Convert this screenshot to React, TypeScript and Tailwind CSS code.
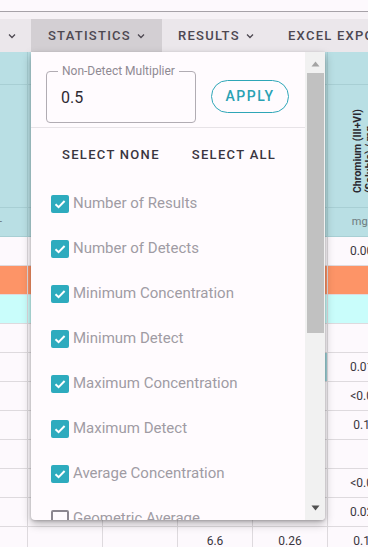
import React from "react";

const Chevron = () => (
  <svg width="10" height="10" viewBox="0 0 10 10" className="ml-[5px] shrink-0">
    <path d="M2 3.5 L5 6.5 L8 3.5" fill="none" stroke="currentColor" strokeWidth="1.3" />
  </svg>
);

const Check = () => (
  <span className="flex h-[18px] w-[18px] items-center justify-center rounded-[2px] bg-[#2eabbe]">
    <svg width="14" height="14" viewBox="0 0 14 14">
      <path d="M2.5 7.2 L5.6 10.2 L11.6 4" fill="none" stroke="white" strokeWidth="2" />
    </svg>
  </span>
);

const stats = [
  { label: "Number of Results", on: true },
  { label: "Number of Detects", on: true },
  { label: "Minimum Concentration", on: true },
  { label: "Minimum Detect", on: true },
  { label: "Maximum Concentration", on: true },
  { label: "Maximum Detect", on: true },
  { label: "Average Concentration", on: true },
  { label: "Geometric Average", on: false },
];

type RowProps = { bg: string; cells: string[]; mark?: boolean };

const DataRow = ({ bg, cells, mark }: RowProps) => (
  <div className={`grid h-[29px] grid-cols-[27px_75px_75px_75px_75px_75px] border-b border-[#dedade] ${bg}`}>
    {cells.map((c, i) => (
      <div
        key={i}
        className={`relative flex items-center justify-center text-[12px] text-[#3a363d] ${i > 0 ? "border-l border-[#dedade]" : ""}`}
      >
        {c}
        {mark && i === 4 && <span className="absolute right-0 top-0 h-full w-[2px] bg-[#9fd3da]" />}
      </div>
    ))}
  </div>
);

const rows: RowProps[] = [
  { bg: "bg-[#fdf9fd]", cells: ["", "", "", "", "", "0.005"] },
  { bg: "bg-[#fd9467]", cells: ["", "", "", "", "", ""] },
  { bg: "bg-[#c9fdfb]", cells: ["", "", "", "", "", ""] },
  { bg: "bg-[#fdf9fd]", cells: ["", "", "", "", "", ""] },
  { bg: "bg-[#fdf9fd]", cells: ["", "", "", "", "", "0.013"], mark: true },
  { bg: "bg-[#fdf9fd]", cells: ["", "", "", "", "", "<0.01"] },
  { bg: "bg-[#fdf9fd]", cells: ["", "", "", "", "", "0.12"] },
  { bg: "bg-[#fdf9fd]", cells: ["", "", "", "", "", ""] },
  { bg: "bg-[#fdf9fd]", cells: ["", "", "", "", "", "<0.01"] },
  { bg: "bg-[#fdf9fd]", cells: ["", "", "", "", "", "0.023"] },
  { bg: "bg-[#fdf9fd]", cells: ["", "", "", "6.6", "0.26", "0.14"] },
];

export default function App() {
  return (
    <div className="relative h-[547px] w-[368px] overflow-hidden bg-[#fdf9fd] font-['Roboto',sans-serif]">
      <div className="h-[11px] bg-[#fdf9fd]" />
      <div className="h-px bg-[#a6a2a8]" />
      <div className="h-[7px] bg-[#f6f2f6]" />

      {/* toolbar */}
      <div className="flex h-[33px] items-center overflow-hidden whitespace-nowrap bg-[#ebe7eb] text-[13px] font-medium tracking-[1.25px] text-[#4d4851]">
        <div className="flex h-full w-[31px] shrink-0 items-center pl-[2px]">
          <Chevron />
        </div>
        <div className="flex h-full w-[131px] shrink-0 items-center bg-[#d3cfd3] pl-[17px]">
          STATISTICS
          <Chevron />
        </div>
        <div className="flex h-full w-[110px] shrink-0 items-center pl-[16px]">
          RESULTS
          <Chevron />
        </div>
        <div className="flex h-full shrink-0 items-center pl-[16px]">EXCEL EXPORT</div>
      </div>

      {/* table */}
      <div className="w-[402px]">
        <div className="grid h-[33px] grid-cols-[27px_75px_75px_75px_75px_75px] border-b border-[#a8cfd4] bg-[#b9dfe4]">
          {[0, 1, 2, 3, 4, 5].map((i) => (
            <div key={i} className={i > 0 ? "border-l border-[#a8cfd4]" : ""} />
          ))}
        </div>
        <div className="grid h-[123px] grid-cols-[27px_75px_75px_75px_75px_75px] border-b border-[#a8cfd4] bg-[#b9dfe4]">
          {[0, 1, 2, 3, 4].map((i) => (
            <div key={i} className={i > 0 ? "border-l border-[#a8cfd4]" : ""} />
          ))}
          <div className="flex items-end justify-start border-l border-[#a8cfd4] pb-[14px] pl-[24px]">
            <div className="rotate-180 text-[10.5px] font-bold leading-[12px] text-[#2b2830] [writing-mode:vertical-rl]">
              Chromium (III+VI)
              <br />
              (Soluble) / mg
            </div>
          </div>
        </div>
        <div className="grid h-[29px] grid-cols-[27px_75px_75px_75px_75px_75px] border-b border-[#a8cfd4] bg-[#b9dfe4] text-[11px] text-[#6e7a7d]">
          <div className="flex items-center justify-end pr-[25px]">-</div>
          {[1, 2, 3, 4].map((i) => (
            <div key={i} className="border-l border-[#a8cfd4]" />
          ))}
          <div className="flex items-center justify-center border-l border-[#a8cfd4]">mg/L</div>
        </div>
        {rows.map((r, i) => (
          <DataRow key={i} {...r} />
        ))}
      </div>

      {/* statistics dropdown */}
      <div className="absolute left-[31px] top-[52px] flex h-[468px] w-[294px] overflow-hidden rounded-b-[4px] bg-[#fffbfe] shadow-[0_4px_10px_rgba(0,0,0,0.28),0_1px_3px_rgba(0,0,0,0.2)]">
        <div className="flex-1 overflow-hidden">
          <div className="flex items-center border-b border-[#e7e3e7] pb-[4px] pl-[15px] pr-[16px] pt-[19px]">
            <div className="relative h-[52px] w-[150px] shrink-0 rounded-[4px] border border-[#b1acb3]">
              <span className="absolute left-[11px] top-[-8px] bg-[#fffbfe] px-[4px] text-[12px] leading-[14px] text-[#8f8a93]">
                Non-Detect Multiplier
              </span>
              <div className="flex h-full items-center pl-[14px] pt-[2px] text-[16px] text-[#2e2a32]">0.5</div>
            </div>
            <button className="ml-[15px] mt-[-2px] flex h-[33px] w-[78px] shrink-0 items-center justify-center rounded-full border border-[#2ea6b7] text-[14px] font-medium tracking-[1.5px] text-[#2aa1b3]">
              APPLY
            </button>
          </div>
          <div className="flex pl-[15px] pt-[15px] text-[13px] font-medium tracking-[1.3px] text-[#3a3540]">
            <button className="h-[24px] px-[16px]">SELECT NONE</button>
            <button className="h-[24px] px-[16px]">SELECT ALL</button>
          </div>
          <div className="flex flex-col pl-[20px] pt-[14px]">
            {stats.map((s) => (
              <div key={s.label} className="flex h-[45px] items-center whitespace-nowrap">
                {s.on ? (
                  <Check />
                ) : (
                  <span className="h-[18px] w-[18px] rounded-[2px] border-2 border-[#8c8790]" />
                )}
                <span className="ml-[4px] text-[15px] text-[#a09ba4]">{s.label}</span>
              </div>
            ))}
          </div>
        </div>

        {/* scrollbar */}
        <div className="flex w-[20px] flex-col items-center bg-[#f1f1f1]">
          <div className="flex h-[21px] items-center justify-center pt-[3px]">
            <svg width="9" height="6" viewBox="0 0 9 6">
              <path d="M0.5 5.5 L4.5 0.5 L8.5 5.5 Z" fill="#a3a3a3" />
            </svg>
          </div>
          <div className="h-[260px] w-[17px] bg-[#c1c1c1]" />
          <div className="flex-1" />
          <div className="flex h-[21px] items-center justify-center pb-[3px]">
            <svg width="9" height="6" viewBox="0 0 9 6">
              <path d="M0.5 0.5 L8.5 0.5 L4.5 5.5 Z" fill="#505050" />
            </svg>
          </div>
        </div>
      </div>
    </div>
  );
}
